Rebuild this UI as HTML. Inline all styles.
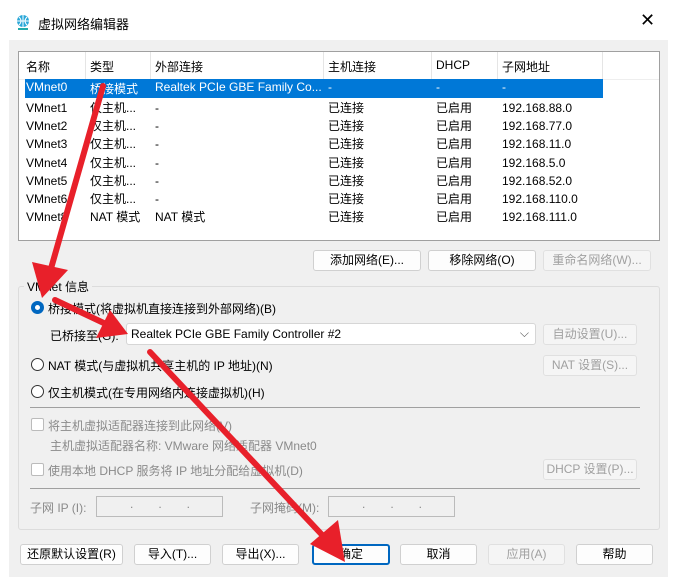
<!DOCTYPE html>
<html><head><meta charset="utf-8"><style>
*{margin:0;padding:0;box-sizing:border-box}
body{width:677px;height:577px;background:#fff;font-family:"Liberation Sans","Noto Sans CJK SC",sans-serif;font-size:12px;color:#000;position:relative;overflow:hidden}
.a{position:absolute;white-space:nowrap}
.body{position:absolute;left:9px;top:40px;width:659px;height:537px;background:#f0f0f0}
.tbl{position:absolute;left:18px;top:51px;width:642px;height:190px;background:#fff;border:1px solid #a0a0a0}
.btn{position:absolute;height:21px;background:#fdfdfd;border:1px solid #d0d0d0;border-radius:3px;text-align:center;line-height:19px;font-size:12px}
.dis{color:#a0a0a0;background:#f5f5f5;border-color:#e0e0e0}
.g{color:#8a8a8a}
.sep{position:absolute;top:0;width:1px;height:27px;background:#e5e5e5}
.radio{position:absolute;width:13px;height:13px;border:1px solid #333;border-radius:50%;background:#fff}
.cb{position:absolute;width:13px;height:13px;border:1px solid #bbb;border-radius:2px;background:#fff}
</style></head><body>
<svg class="a" style="left:15px;top:14px" width="16" height="16" viewBox="0 0 16 16"><circle cx="8" cy="7" r="6" fill="#2aa7d8"/><path d="M2 7h12M8 1v12M4 3q4 4 0 8M12 3q-4 4 0 8" stroke="#fff" stroke-width="1" fill="none"/><rect x="3" y="14" width="10" height="2" fill="#2aa" /></svg>
<div class="a" style="left:38px;top:14px;font-size:13px">虚拟网络编辑器</div>
<div class="a" style="left:640px;top:10px;font-size:18px;font-weight:300">✕</div>
<div class="body"></div>
<div class="tbl">
 <div class="sep" style="left:66px"></div><div class="sep" style="left:131px"></div><div class="sep" style="left:304px"></div><div class="sep" style="left:412px"></div><div class="sep" style="left:478px"></div><div class="sep" style="left:583px"></div>
 <div class="a" style="left:0;top:27px;width:640px;height:1px;background:#eee"></div>
 <div class="a" style="left:6px;top:27px;width:578px;height:19px;background:#0078d7"></div>
</div>
<div class="a" style="left:26px;top:58px">名称</div><div class="a" style="left:90px;top:58px">类型</div><div class="a" style="left:155px;top:58px">外部连接</div><div class="a" style="left:328px;top:58px">主机连接</div><div class="a" style="left:436px;top:58px">DHCP</div><div class="a" style="left:502px;top:58px">子网地址</div>
<div class="a" style="left:26px;top:80px;color:#fff">VMnet0</div><div class="a" style="left:90px;top:80px;color:#fff">桥接模式</div><div class="a" style="left:155px;top:80px;color:#fff">Realtek PCIe GBE Family Co...</div><div class="a" style="left:328px;top:80px;color:#fff">-</div><div class="a" style="left:436px;top:80px;color:#fff">-</div><div class="a" style="left:502px;top:80px;color:#fff">-</div>
<div class="a" style="left:26px;top:99px;line-height:18.2px">VMnet1<br>VMnet2<br>VMnet3<br>VMnet4<br>VMnet5<br>VMnet6<br>VMnet8</div>
<div class="a" style="left:90px;top:99px;line-height:18.2px">仅主机...<br>仅主机...<br>仅主机...<br>仅主机...<br>仅主机...<br>仅主机...<br>NAT 模式</div>
<div class="a" style="left:155px;top:99px;line-height:18.2px">-<br>-<br>-<br>-<br>-<br>-<br>NAT 模式</div>
<div class="a" style="left:328px;top:99px;line-height:18.2px">已连接<br>已连接<br>已连接<br>已连接<br>已连接<br>已连接<br>已连接</div>
<div class="a" style="left:436px;top:99px;line-height:18.2px">已启用<br>已启用<br>已启用<br>已启用<br>已启用<br>已启用<br>已启用</div>
<div class="a" style="left:502px;top:99px;line-height:18.2px">192.168.88.0<br>192.168.77.0<br>192.168.11.0<br>192.168.5.0<br>192.168.52.0<br>192.168.110.0<br>192.168.111.0</div>
<div class="btn" style="left:313px;top:250px;width:108px">添加网络(E)...</div>
<div class="btn" style="left:428px;top:250px;width:108px">移除网络(O)</div>
<div class="btn dis" style="left:543px;top:250px;width:108px">重命名网络(W)...</div>
<div class="a" style="left:18px;top:286px;width:642px;height:244px;border:1px solid #dcdcdc;border-radius:3px"></div>
<div class="a" style="left:24px;top:278px;background:#f0f0f0;padding:0 3px">VMnet 信息</div>
<div class="radio" style="left:31px;top:301px;border:4px solid #0067c0"></div>
<div class="a" style="left:48px;top:300px">桥接模式(将虚拟机直接连接到外部网络)(B)</div>
<div class="a" style="left:50px;top:327px">已桥接至(G):</div>
<div class="a" style="left:126px;top:323px;width:410px;height:22px;background:#fff;border:1px solid #d6d6d6;border-radius:3px;padding:3px 4px">Realtek PCIe GBE Family Controller #2<span style="position:absolute;right:6px;top:2px;color:#555">⌵</span></div>
<div class="btn dis" style="left:543px;top:324px;width:94px">自动设置(U)...</div>
<div class="radio" style="left:31px;top:358px"></div>
<div class="a" style="left:48px;top:357px">NAT 模式(与虚拟机共享主机的 IP 地址)(N)</div>
<div class="btn dis" style="left:543px;top:355px;width:94px">NAT 设置(S)...</div>
<div class="radio" style="left:31px;top:385px"></div>
<div class="a" style="left:48px;top:384px">仅主机模式(在专用网络内连接虚拟机)(H)</div>
<div class="a" style="left:30px;top:407px;width:610px;height:1px;background:#a0a0a0"></div>
<div class="cb" style="left:31px;top:418px"></div>
<div class="a g" style="left:48px;top:417px">将主机虚拟适配器连接到此网络(V)</div>
<div class="a g" style="left:50px;top:437px">主机虚拟适配器名称: VMware 网络适配器 VMnet0</div>
<div class="cb" style="left:31px;top:463px"></div>
<div class="a g" style="left:48px;top:462px">使用本地 DHCP 服务将 IP 地址分配给虚拟机(D)</div>
<div class="btn dis" style="left:543px;top:459px;width:94px">DHCP 设置(P)...</div>
<div class="a" style="left:30px;top:488px;width:610px;height:1px;background:#a0a0a0"></div>
<div class="a g" style="left:30px;top:499px">子网 IP (I):</div>
<div class="a g" style="left:96px;top:496px;width:127px;height:21px;border:1px solid #bbb;background:#f0f0f0;padding-left:33px;letter-spacing:25px">...</div>
<div class="a g" style="left:250px;top:499px">子网掩码(M):</div>
<div class="a g" style="left:328px;top:496px;width:127px;height:21px;border:1px solid #bbb;background:#f0f0f0;padding-left:33px;letter-spacing:25px">...</div>
<div class="btn" style="left:20px;top:544px;width:103px">还原默认设置(R)</div>
<div class="btn" style="left:134px;top:544px;width:77px">导入(T)...</div>
<div class="btn" style="left:222px;top:544px;width:77px">导出(X)...</div>
<div class="btn" style="left:312px;top:544px;width:78px;border:2px solid #0067c0;line-height:17px">确定</div>
<div class="btn" style="left:400px;top:544px;width:77px">取消</div>
<div class="btn dis" style="left:488px;top:544px;width:77px">应用(A)</div>
<div class="btn" style="left:576px;top:544px;width:77px">帮助</div>
<svg class="a" style="left:0;top:0" width="677" height="577">
<g stroke="#e8202a" stroke-width="6" stroke-linecap="round" fill="#e8202a">
<line x1="103" y1="86" x2="50" y2="272"/>
<line x1="55" y1="300" x2="108" y2="325"/>
<line x1="150" y1="352" x2="325" y2="538"/>
</g>
<g fill="#e8202a">
<polygon points="42,298 32,262 68,270"/>
<polygon points="128,334 96,338 110,310"/>
<polygon points="345,562 310,544 338,520"/>
</g>
</svg>
</body></html>
